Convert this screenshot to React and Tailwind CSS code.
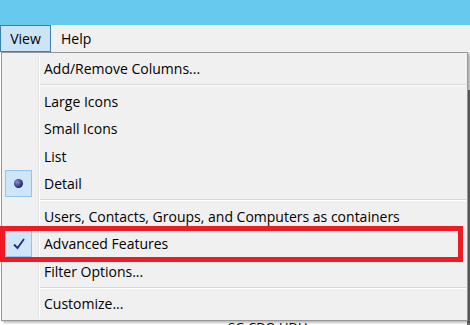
import React from "react";

const font = { fontFamily: '"Open Sans", "Noto Sans", sans-serif' };

function Row({ label, icon }) {
  return (
    <div className="flex h-[27.5px] items-stretch">
      <div className="w-[37px] flex items-center justify-start pl-[3px] border-r border-[#e3e3e3]">
        {icon}
      </div>
      <div className="border-l border-white flex items-center pl-[4px] text-[14px] text-black whitespace-nowrap">
        {label}
      </div>
    </div>
  );
}

function Sep() {
  return (
    <div className="flex h-[5px] items-stretch">
      <div className="w-[37px] border-r border-[#e3e3e3]" />
      <div className="flex-1 border-l border-white flex flex-col justify-center pr-[1px]">
        <div className="h-px bg-[#d7d7d7]" />
        <div className="h-px bg-white" />
      </div>
    </div>
  );
}

function IconBox({ children }) {
  return (
    <div className="w-[27px] h-[27px] bg-[#cfe6f8] border border-[#90c5ef] flex items-center justify-center">
      {children}
    </div>
  );
}

export default function App() {
  return (
    <div className="w-[470px] h-[325px] overflow-hidden relative bg-white" style={font}>
      <div className="h-[25px] bg-[#67c9ed]" />
      <div className="h-[27px] bg-[#f0f0f0] flex items-stretch text-[14px] text-black">
        <div className="w-[51px] bg-[#cce4f7] border border-[#3c7fb1] flex items-center justify-center">
          View
        </div>
        <div className="flex items-center pl-[10px]">Help</div>
      </div>

      {/* content behind the menu */}
      <div className="relative h-[273px] bg-white">
        <div className="absolute right-0 top-0 w-[3px] h-full bg-[#e8e8e8]">
          <div className="mt-[38px] h-full bg-[#6d6d6d]" />
        </div>
        <div className="absolute left-[228px] top-[266px] text-[13px] text-black">SG CDO UDU</div>
      </div>

      {/* dropdown */}
      <div className="absolute left-[1px] top-[52px] w-[467px] h-[269px] bg-[#f0f0f0] border border-[#979797] pt-[2px] shadow-[2px_2px_2px_rgba(0,0,0,0.25)]">
        <Row label="Add/Remove Columns..." />
        <Sep />
        <Row label="Large Icons" />
        <Row label="Small Icons" />
        <Row label="List" />
        <Row
          label="Detail"
          icon={
            <IconBox>
              <div className="w-[9px] h-[9px] rounded-full bg-[radial-gradient(circle_at_35%_35%,#8a8fd0,#1f2370_70%)]" />
            </IconBox>
          }
        />
        <Sep />
        <Row label="Users, Contacts, Groups, and Computers as containers" />
        <Row
          label="Advanced Features"
          icon={
            <IconBox>
              <svg width="14" height="14" viewBox="0 0 14 14">
                <path d="M2 7.5 L5.5 11 L12 2" fill="none" stroke="#1f2a8a" strokeWidth="1.8" />
              </svg>
            </IconBox>
          }
        />
        <Row label="Filter Options..." />
        <Sep />
        <Row label="Customize..." />
      </div>

      {/* red highlight */}
      <div className="absolute left-0 top-[226px] w-[463px] h-[36px] border-[5px] border-[#ed1c24]" />
    </div>
  );
}
